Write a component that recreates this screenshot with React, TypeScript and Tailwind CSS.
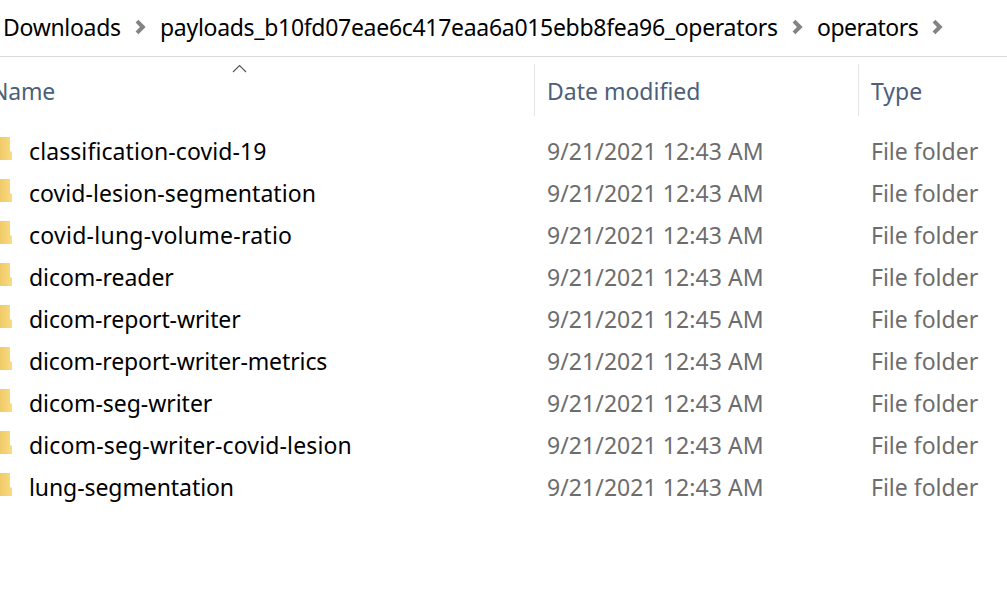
const rows = [
  { name: "classification-covid-19", date: "9/21/2021 12:43 AM", track: "tracking-[0.09px]" },
  { name: "covid-lesion-segmentation", date: "9/21/2021 12:43 AM", track: "tracking-[0.06px]" },
  { name: "covid-lung-volume-ratio", date: "9/21/2021 12:43 AM", track: "tracking-[0.26px]" },
  { name: "dicom-reader", date: "9/21/2021 12:43 AM", track: "tracking-[-0.06px]" },
  { name: "dicom-report-writer", date: "9/21/2021 12:45 AM", track: "tracking-[-0.1px]" },
  { name: "dicom-report-writer-metrics", date: "9/21/2021 12:43 AM", track: "tracking-[-0.11px]" },
  { name: "dicom-seg-writer", date: "9/21/2021 12:43 AM", track: "tracking-[-0.03px]" },
  { name: "dicom-seg-writer-covid-lesion", date: "9/21/2021 12:43 AM", track: "tracking-[0.14px]" },
  { name: "lung-segmentation", date: "9/21/2021 12:43 AM", track: "tracking-[-0.08px]" },
];

function Chevron() {
  return (
    <svg className="h-4 w-3 shrink-0" viewBox="0 0 12 16" fill="none" stroke="#838383" strokeWidth="4">
      <path d="M2 2.2 7.8 8 2 13.8" />
    </svg>
  );
}

function FolderEdge() {
  return (
    <svg className="h-6 w-[13px] shrink-0" viewBox="0 0 13 24">
      <defs>
        <linearGradient id="folder" x1="0" y1="0" x2="1" y2="0">
          <stop offset="0" stopColor="#efca68" />
          <stop offset="1" stopColor="#fbdc80" />
        </linearGradient>
      </defs>
      <path d="M0 0H10V14L12 15V23H0Z" fill="url(#folder)" />
    </svg>
  );
}

export default function App() {
  return (
    <div className="h-[605px] w-[1007px] overflow-hidden bg-white font-['Noto_Sans','Open_Sans',sans-serif] text-[23px] leading-[42px] whitespace-nowrap text-black">
      <nav className="flex h-[57px] items-center border-b border-[#d9d9d9] pb-[3px]">
        <span className="w-[135px] shrink-0 pl-[3px] tracking-[-0.3px]">Downloads</span>
        <Chevron />
        <span className="w-[645px] shrink-0 pl-[13px] tracking-[-0.3px]">payloads_b10fd07eae6c417eaa6a015ebb8fea96_operators</span>
        <Chevron />
        <span className="w-[128px] shrink-0 pl-[13px] tracking-[-0.5px]">operators</span>
        <Chevron />
      </nav>
      <header className="flex h-[74px] pt-[7px] text-[#4c607a]">
        <div className="relative h-[52px] w-[535px] shrink-0 border-r border-[#e5e5e5] pt-[6px]">
          <span className="-ml-[9px] tracking-[-0.2px]">Name</span>
          <svg className="absolute top-0 left-[232px] h-[9px] w-[15px]" viewBox="0 0 15 9" fill="none" stroke="#555" strokeWidth="1.1">
            <path d="M1 8 7.5 1.5 14 8" />
          </svg>
        </div>
        <div className="h-[52px] w-[324px] shrink-0 border-r border-[#e5e5e5] pt-[6px] pl-[12px]">Date modified</div>
        <div className="pt-[6px] pl-[12px]">Type</div>
      </header>
      <main>
        {rows.map((row) => (
          <div key={row.name} className="flex h-[42px]">
            <div className="flex w-[547px] shrink-0">
              <div className="w-[29px] shrink-0 pt-[6px]"><FolderEdge /></div>
              <span className={`${row.track} -mt-px`}>{row.name}</span>
            </div>
            <div className="-mt-px w-[324px] shrink-0 tracking-[0.06px] text-[#6d6d6d]">{row.date}</div>
            <div className="-mt-px text-[#6d6d6d]">File folder</div>
          </div>
        ))}
      </main>
    </div>
  );
}
